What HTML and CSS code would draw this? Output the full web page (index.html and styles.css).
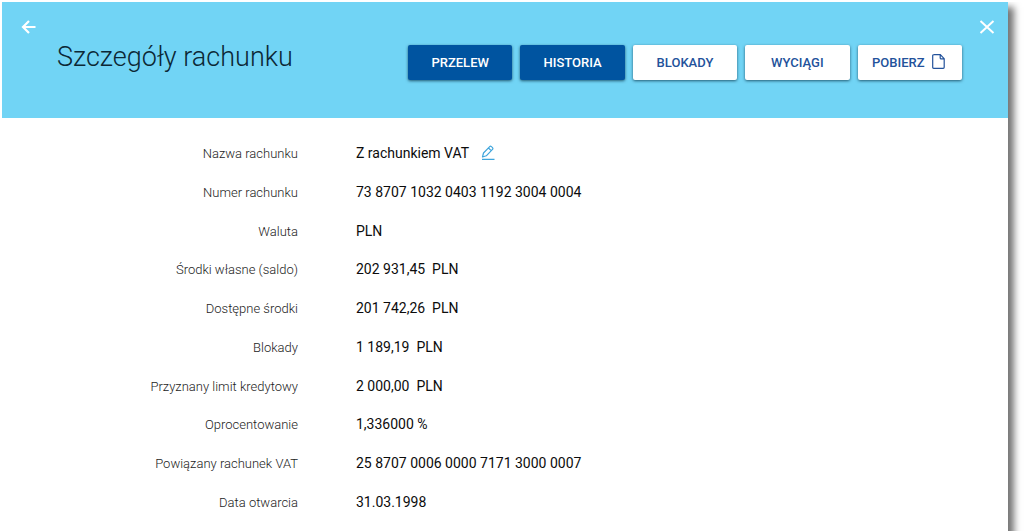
FILE: index.html
```html
<!DOCTYPE html>
<html lang="pl">
<head>
<meta charset="utf-8">
<meta name="viewport" content="width=device-width, initial-scale=1">
<title>Szczegóły rachunku</title>
<link rel="stylesheet" href="styles.css">
</head>
<body>
<main class="panel">
  <header class="header">
    <button class="icon-button" type="button" aria-label="Wstecz">
      <svg width="16" height="16" viewBox="0 0 16 16" fill="none" stroke="currentColor" stroke-width="2.200"><path d="M14.500 8H2M8 2L2 8l6 6"/></svg>
    </button>
    <h1 class="title">Szczegóły rachunku</h1>
    <nav class="actions" aria-label="Operacje">
      <button class="action action-primary" type="button">PRZELEW</button>
      <button class="action action-primary" type="button">HISTORIA</button>
      <button class="action" type="button">BLOKADY</button>
      <button class="action" type="button">WYCIĄGI</button>
      <button class="action action-icon" type="button">POBIERZ
        <svg width="13" height="15" viewBox="0 0 13 15" fill="none" stroke="currentColor" stroke-width="1.200"><path d="M1.500.700h6.800l3.900 4v8.600q0 1-1 1H1.700q-1 0-1-1V1.700q0-1 1-1zM8.200.900v3q0 1 1 1h2.900"/></svg>
      </button>
    </nav>
    <button class="icon-button" type="button" aria-label="Zamknij">
      <svg width="16" height="16" viewBox="0 0 16 16" fill="none" stroke="currentColor" stroke-width="2"><path d="M1.500 2l13 12M14.500 2l-13 12"/></svg>
    </button>
  </header>
  <dl class="details">
    <dt>Nazwa rachunku</dt>
    <dd>Z rachunkiem VAT
      <button class="edit" type="button" aria-label="Edytuj nazwę">
        <svg width="14" height="16" viewBox="0 0 14 16" fill="none" stroke="currentColor" stroke-width="1.200" stroke-linejoin="round"><path d="M1.500 12l1-4L8.700 1.600q.8-.8 1.700 0l1.100 1q.8.900 0 1.700L5.300 10.800zM7.500 3l2.700 2.600M1 14.400h12.500"/></svg>
      </button>
    </dd>
    <dt>Numer rachunku</dt><dd>73 8707 1032 0403 1192 3004 0004</dd>
    <dt>Waluta</dt><dd>PLN</dd>
    <dt>Środki własne (saldo)</dt><dd>202 931,45&nbsp; PLN</dd>
    <dt>Dostępne środki</dt><dd>201 742,26&nbsp; PLN</dd>
    <dt>Blokady</dt><dd>1 189,19&nbsp; PLN</dd>
    <dt>Przyznany limit kredytowy</dt><dd>2 000,00&nbsp; PLN</dd>
    <dt>Oprocentowanie</dt><dd>1,336000 %</dd>
    <dt>Powiązany rachunek VAT</dt><dd>25 8707 0006 0000 7171 3000 0007</dd>
    <dt>Data otwarcia</dt><dd>31.03.1998</dd>
  </dl>
</main>
</body>
</html>
```
FILE: styles.css
```css
* { box-sizing: border-box; }
body {
  margin: 0;
  padding: 2px 16px 0 2px;
  background: #fff;
  color: #1c1c1c;
  font-family: Roboto, "Liberation Sans", sans-serif;
  overflow: hidden;
}
.panel {
  min-height: 100vh;
  background: #fff;
  box-shadow: 5px 6px 7px 1px rgba(0, 0, 0, 0.55);
  clip-path: inset(0 -16px 0 0);
}
.header {
  display: flex;
  align-items: flex-start;
  min-height: 116px;
  padding: 16px 12px 0 18px;
  background: #71d4f5;
}
.icon-button, .edit {
  display: flex;
  padding: 0;
  border: 0;
  background: none;
  cursor: pointer;
}
.icon-button { padding: 1px; color: #fff; }
.title {
  flex: 1;
  margin: 22px 0 0 19px;
  font-size: 27px;
  line-height: 34px;
  font-weight: 300;
  color: #0c2836;
}
.actions {
  display: grid;
  grid-template-columns: repeat(5, 1fr);
  gap: 8px;
  flex: 0 1 554px;
  margin: 27px 16px 0 0;
}
.action {
  display: flex;
  align-items: center;
  justify-content: center;
  gap: 7px;
  height: 35px;
  padding: 0;
  border: 0;
  border-radius: 2px;
  background: #fff;
  box-shadow: 0 1px 3px rgba(0, 40, 60, 0.7);
  color: #23529b;
  font: 500 13px/18px Roboto, "Liberation Sans", sans-serif;
  cursor: pointer;
}
.action-icon { padding-right: 3px; }
.action-icon svg { margin-bottom: 2px; }
.action-primary { background: #0054a0; color: #fff; }
.details {
  display: grid;
  grid-template-columns: 296px 1fr;
  grid-auto-rows: 1fr;
  column-gap: 58px;
  min-height: 403px;
  margin: 0;
  padding-top: 16px;
  align-items: center;
  line-height: 20px;
}
.details dt {
  padding-top: 2px;
  text-align: right;
  font-size: 13px;
  font-weight: 300;
}
.details dd {
  display: flex;
  align-items: center;
  gap: 12px;
  margin: 0;
  font-size: 14px;
  color: #0c0c0c;
}
.edit { color: #3fa5dc; }
```
